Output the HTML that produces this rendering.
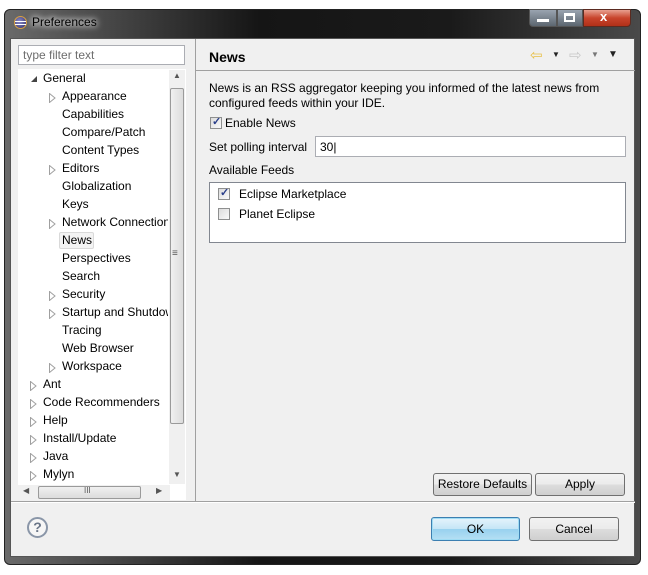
<!DOCTYPE html>
<html><head><meta charset="utf-8"><style>
*{box-sizing:border-box;margin:0;padding:0}
body{width:648px;height:575px;background:#fff;font-family:"Liberation Sans",sans-serif;font-size:12px;color:#000;position:relative;overflow:hidden}
.abs{position:absolute}
.win{left:4px;top:9px;width:637px;height:556px;border-radius:6px;background:linear-gradient(90deg,#6a6a6a,#151515 40%,#1a1a1a 70%,#4a4a4a);border:1px solid #222}
.client{left:10px;top:38px;width:625px;height:519px;background:#f0f0f0;border:1px solid #555}
.t{position:absolute;white-space:nowrap;font-size:12px}
.arr{position:absolute;width:7px;height:10px}
.btn{position:absolute;border:1px solid #707070;border-radius:3px;background:linear-gradient(#f2f2f2,#ebebeb 50%,#dddddd 51%,#cfcfcf);text-align:center;font-size:12px}
.cb{position:absolute;width:12px;height:12px;border:1px solid #8e8f8f;background:linear-gradient(135deg,#dcdcdc,#fafafa)}
.ck{position:absolute;left:1px;top:-3px;color:#2a3f8a;font-size:11px;font-weight:bold}
</style></head><body>
<div class="abs win"></div>
<div class="abs" style="left:14px;top:16px;width:13px;height:13px;border-radius:50%;background:radial-gradient(circle at 40% 40%,#8c8cc8,#2c2c6a);border:1px solid #d9a040"></div>
<div class="abs" style="left:15px;top:21px;width:11px;height:1px;background:#fff"></div>
<div class="abs" style="left:15px;top:24px;width:11px;height:1px;background:#fff"></div>
<div class="t" style="left:32px;top:15px;color:#000;font-size:12px;text-shadow:0 0 6px #fff,0 0 8px #fff">Preferences</div>
<div class="abs" style="left:529px;top:9px;width:28px;height:18px;border:1px solid #555;border-radius:0 0 0 4px;background:linear-gradient(#9aa4b0,#5c6670)"></div>
<div class="abs" style="left:537px;top:19px;width:12px;height:3px;background:#fff"></div>
<div class="abs" style="left:557px;top:9px;width:26px;height:18px;border:1px solid #555;background:linear-gradient(#9aa4b0,#5c6670)"></div>
<div class="abs" style="left:564px;top:13px;width:11px;height:9px;border:2px solid #fff;border-top-width:3px"></div>
<div class="abs" style="left:583px;top:9px;width:48px;height:18px;border:1px solid #5a2a20;border-radius:0 0 4px 0;background:linear-gradient(#e8a090,#c8442c 50%,#b03018)"></div>
<div class="t" style="left:600px;top:9px;color:#fff;font-weight:bold;font-size:13px">x</div>
<div class="abs client"></div>
<div class="abs" style="left:18px;top:45px;width:167px;height:20px;background:#fff;border:1px solid #abadb3"></div>
<div class="t" style="left:23px;top:48px;color:#6d6d6d">type filter text</div>
<div class="abs" style="left:18px;top:69px;width:168px;height:431px;background:#fff"></div>
<div class="abs" style="left:31px;top:76px;width:0;height:0;border-left:6px solid transparent;border-bottom:6px solid #444"></div>
<div class="t" style="left:43px;top:71px">General</div>
<svg class="arr" style="left:49px;top:93px" viewBox="0 0 7 10"><path d="M0.5 0.5L6 5L0.5 9.5Z" fill="#fff" stroke="#a0a0a0"/></svg><div class="t" style="left:62px;top:89px">Appearance</div>
<div class="t" style="left:62px;top:107px">Capabilities</div>
<div class="t" style="left:62px;top:125px">Compare/Patch</div>
<div class="t" style="left:62px;top:143px">Content Types</div>
<svg class="arr" style="left:49px;top:165px" viewBox="0 0 7 10"><path d="M0.5 0.5L6 5L0.5 9.5Z" fill="#fff" stroke="#a0a0a0"/></svg><div class="t" style="left:62px;top:161px">Editors</div>
<div class="t" style="left:62px;top:179px">Globalization</div>
<div class="t" style="left:62px;top:197px">Keys</div>
<svg class="arr" style="left:49px;top:219px" viewBox="0 0 7 10"><path d="M0.5 0.5L6 5L0.5 9.5Z" fill="#fff" stroke="#a0a0a0"/></svg><div class="t" style="left:62px;top:215px;width:106px;overflow:hidden">Network Connections</div>
<div class="abs" style="left:59px;top:232px;width:35px;height:17px;background:#f3f3f3;border:1px solid #d9d9d9;border-radius:2px"></div>
<div class="t" style="left:62px;top:233px">News</div>
<div class="t" style="left:62px;top:251px">Perspectives</div>
<div class="t" style="left:62px;top:269px">Search</div>
<svg class="arr" style="left:49px;top:291px" viewBox="0 0 7 10"><path d="M0.5 0.5L6 5L0.5 9.5Z" fill="#fff" stroke="#a0a0a0"/></svg><div class="t" style="left:62px;top:287px">Security</div>
<svg class="arr" style="left:49px;top:309px" viewBox="0 0 7 10"><path d="M0.5 0.5L6 5L0.5 9.5Z" fill="#fff" stroke="#a0a0a0"/></svg><div class="t" style="left:62px;top:305px;width:106px;overflow:hidden">Startup and Shutdown</div>
<div class="t" style="left:62px;top:323px">Tracing</div>
<div class="t" style="left:62px;top:341px">Web Browser</div>
<svg class="arr" style="left:49px;top:363px" viewBox="0 0 7 10"><path d="M0.5 0.5L6 5L0.5 9.5Z" fill="#fff" stroke="#a0a0a0"/></svg><div class="t" style="left:62px;top:359px">Workspace</div>
<svg class="arr" style="left:30px;top:381px" viewBox="0 0 7 10"><path d="M0.5 0.5L6 5L0.5 9.5Z" fill="#fff" stroke="#a0a0a0"/></svg><div class="t" style="left:43px;top:377px">Ant</div>
<svg class="arr" style="left:30px;top:399px" viewBox="0 0 7 10"><path d="M0.5 0.5L6 5L0.5 9.5Z" fill="#fff" stroke="#a0a0a0"/></svg><div class="t" style="left:43px;top:395px">Code Recommenders</div>
<svg class="arr" style="left:30px;top:417px" viewBox="0 0 7 10"><path d="M0.5 0.5L6 5L0.5 9.5Z" fill="#fff" stroke="#a0a0a0"/></svg><div class="t" style="left:43px;top:413px">Help</div>
<svg class="arr" style="left:30px;top:435px" viewBox="0 0 7 10"><path d="M0.5 0.5L6 5L0.5 9.5Z" fill="#fff" stroke="#a0a0a0"/></svg><div class="t" style="left:43px;top:431px">Install/Update</div>
<svg class="arr" style="left:30px;top:453px" viewBox="0 0 7 10"><path d="M0.5 0.5L6 5L0.5 9.5Z" fill="#fff" stroke="#a0a0a0"/></svg><div class="t" style="left:43px;top:449px">Java</div>
<svg class="arr" style="left:30px;top:471px" viewBox="0 0 7 10"><path d="M0.5 0.5L6 5L0.5 9.5Z" fill="#fff" stroke="#a0a0a0"/></svg><div class="t" style="left:43px;top:467px">Mylyn</div>
<div class="abs" style="left:169px;top:70px;width:16px;height:414px;background:#f0f0f0"></div>
<div class="t" style="left:173px;top:71px;font-size:8px;color:#555">▲</div>
<div class="abs" style="left:170px;top:88px;width:14px;height:336px;border:1px solid #9a9a9a;border-radius:2px;background:linear-gradient(90deg,#f0f0f0,#dcdcdc)"></div>
<div class="t" style="left:172px;top:248px;font-size:10px;color:#555">≡</div>
<div class="t" style="left:173px;top:470px;font-size:8px;color:#555">▼</div>
<div class="abs" style="left:18px;top:485px;width:152px;height:15px;background:#f0f0f0"></div>
<div class="t" style="left:23px;top:486px;font-size:8px;color:#555">◀</div>
<div class="abs" style="left:38px;top:486px;width:103px;height:13px;border:1px solid #9a9a9a;border-radius:2px;background:linear-gradient(#f0f0f0,#dcdcdc)"></div>
<div class="t" style="left:84px;top:486px;font-size:8px;color:#555">III</div>
<div class="t" style="left:156px;top:486px;font-size:8px;color:#555">▶</div>
<div class="abs" style="left:195px;top:39px;width:1px;height:462px;background:#a0a0a0"></div>
<div class="t" style="left:209px;top:49px;font-size:14px;font-weight:bold">News</div>
<div class="abs" style="left:196px;top:70px;width:439px;height:1px;background:#a0a0a0"></div>
<div class="t" style="left:530px;top:46px;font-size:15px;color:#e8c048">⇦</div>
<div class="t" style="left:552px;top:50px;font-size:8px;color:#222">▼</div>
<div class="t" style="left:569px;top:46px;font-size:15px;color:#c8c8c8">⇨</div>
<div class="t" style="left:591px;top:50px;font-size:8px;color:#777">▼</div>
<div class="t" style="left:608px;top:49px;font-size:10px;color:#222">▼</div>
<div class="t" style="left:209px;top:81px">News is an RSS aggregator keeping you informed of the latest news from</div>
<div class="t" style="left:209px;top:96px">configured feeds within your IDE.</div>
<div class="cb" style="left:210px;top:117px"><span class="ck">✓</span></div>
<div class="t" style="left:225px;top:116px">Enable News</div>
<div class="t" style="left:209px;top:140px">Set polling interval</div>
<div class="abs" style="left:315px;top:136px;width:311px;height:21px;background:#fff;border:1px solid #abadb3"></div>
<div class="t" style="left:320px;top:140px">30|</div>
<div class="t" style="left:209px;top:163px">Available Feeds</div>
<div class="abs" style="left:209px;top:182px;width:417px;height:61px;background:#fff;border:1px solid #828790"></div>
<div class="cb" style="left:218px;top:188px"><span class="ck">✓</span></div>
<div class="t" style="left:239px;top:187px">Eclipse Marketplace</div>
<div class="cb" style="left:218px;top:208px"></div>
<div class="t" style="left:239px;top:207px">Planet Eclipse</div>
<div class="btn" style="left:433px;top:473px;width:99px;height:23px;line-height:21px">Restore Defaults</div>
<div class="btn" style="left:535px;top:473px;width:90px;height:23px;line-height:21px">Apply</div>
<div class="abs" style="left:11px;top:501px;width:624px;height:1px;background:#a0a0a0"></div>
<div class="abs" style="left:11px;top:502px;width:624px;height:1px;background:#fff"></div>
<div class="abs" style="left:27px;top:517px;width:21px;height:21px;border-radius:50%;border:2px solid #8a96a8;background:#f6f6f6;text-align:center;font-size:14px;line-height:17px;color:#6a7688;font-weight:bold">?</div>
<div class="btn" style="left:431px;top:517px;width:89px;height:24px;line-height:22px;border-color:#3c7fb1;background:linear-gradient(#e5f4fc,#c4e5f6 50%,#98d1ef 51%,#b6e0f4);box-shadow:0 0 0 1px #9fdcf4 inset">OK</div>
<div class="btn" style="left:529px;top:517px;width:90px;height:24px;line-height:22px">Cancel</div>
</body></html>
